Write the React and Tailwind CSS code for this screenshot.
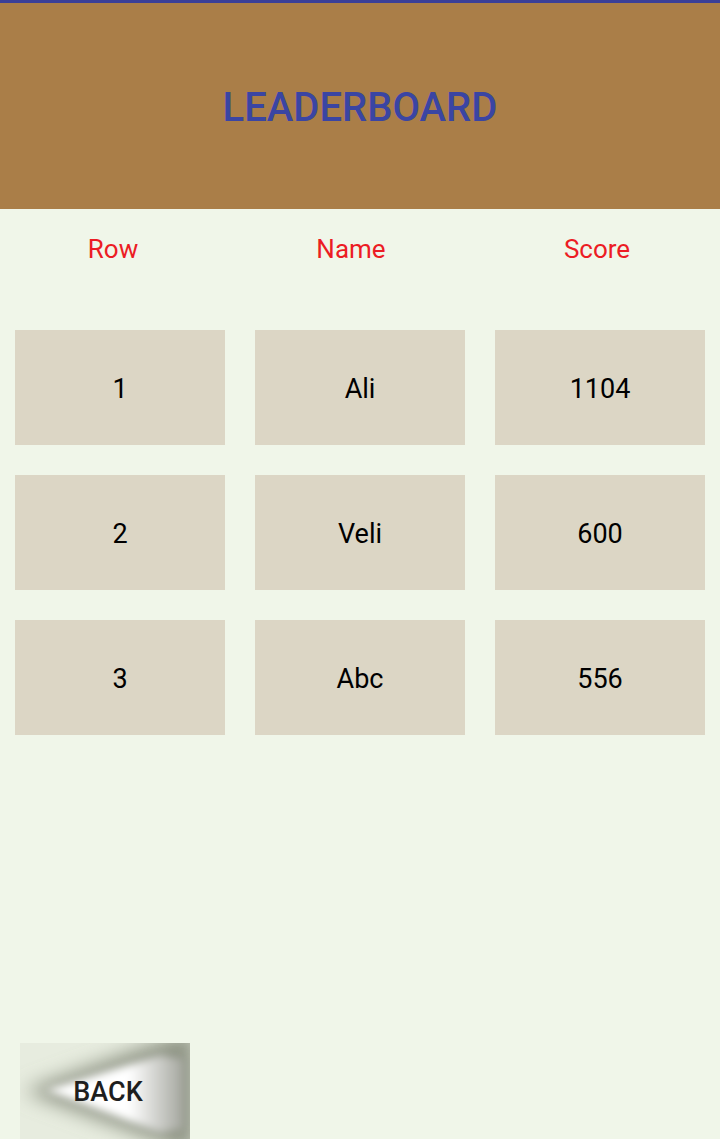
import React from "react";

const rows = [
  ["1", "Ali", "1104"],
  ["2", "Veli", "600"],
  ["3", "Abc", "556"],
];

function BackButton() {
  return (
    <div className="relative w-[170px] h-[96px]">
      <svg width="170" height="96" viewBox="0 0 170 96" className="absolute inset-0">
        <defs>
          <filter id="b1" x="-30%" y="-30%" width="160%" height="160%">
            <feGaussianBlur stdDeviation="10" />
          </filter>
          <filter id="b2" x="-30%" y="-30%" width="160%" height="160%">
            <feGaussianBlur stdDeviation="4" />
          </filter>
          <linearGradient id="g1" x1="0" y1="0" x2="1" y2="0">
            <stop offset="0" stopColor="#ffffff" />
            <stop offset="0.6" stopColor="#ffffff" />
            <stop offset="1" stopColor="#a3a59d" />
          </linearGradient>
          <clipPath id="c1">
            <rect x="0" y="0" width="170" height="96" />
          </clipPath>
        </defs>
        <g clipPath="url(#c1)">
          <rect x="0" y="0" width="170" height="96" fill="#e7ecdf" />
          <polygon points="4,48 175,-14 175,112" fill="#8c9282" filter="url(#b1)" />
          <polygon points="26,47 140,12 164,16 164,86 140,90" fill="url(#g1)" filter="url(#b2)" />
        </g>
      </svg>
      <div className="absolute inset-0 flex items-center justify-center pl-[6px] pt-[3px] text-[27px] font-medium text-[#1e1e1e] leading-none">
        BACK
      </div>
    </div>
  );
}

export default function App() {
  return (
    <div
      className="w-[720px] h-[1139px] flex flex-col bg-[#f0f6e9] overflow-hidden"
      style={{ fontFamily: "Roboto, 'Noto Sans', sans-serif" }}
    >
      <div className="h-[209px] border-t-[3px] border-[#3a3f98] bg-[#aa7e48] flex items-center justify-center">
        <h1 className="text-[40px] font-medium text-[#3a45a3] leading-none pt-[4px]">LEADERBOARD</h1>
      </div>
      <div className="grid grid-cols-3 h-[80px] items-center text-[26px] text-[#ec1c24] leading-none">
        <div className="text-center pr-[14px]">Row</div>
        <div className="text-center pr-[18px]">Name</div>
        <div className="text-center pr-[6px]">Score</div>
      </div>
      <div className="mt-[41px] px-[15px] grid grid-cols-3 gap-[30px]">
        {rows.map((r, i) =>
          r.map((c, j) => (
            <div
              key={i + "-" + j}
              className="h-[115px] bg-[#dcd6c5] flex items-center justify-center pt-[3px] text-[27px] text-black leading-none"
            >
              {c}
            </div>
          ))
        )}
      </div>
      <div className="flex-1" />
      <div className="pl-[20px]">
        <BackButton />
      </div>
    </div>
  );
}
